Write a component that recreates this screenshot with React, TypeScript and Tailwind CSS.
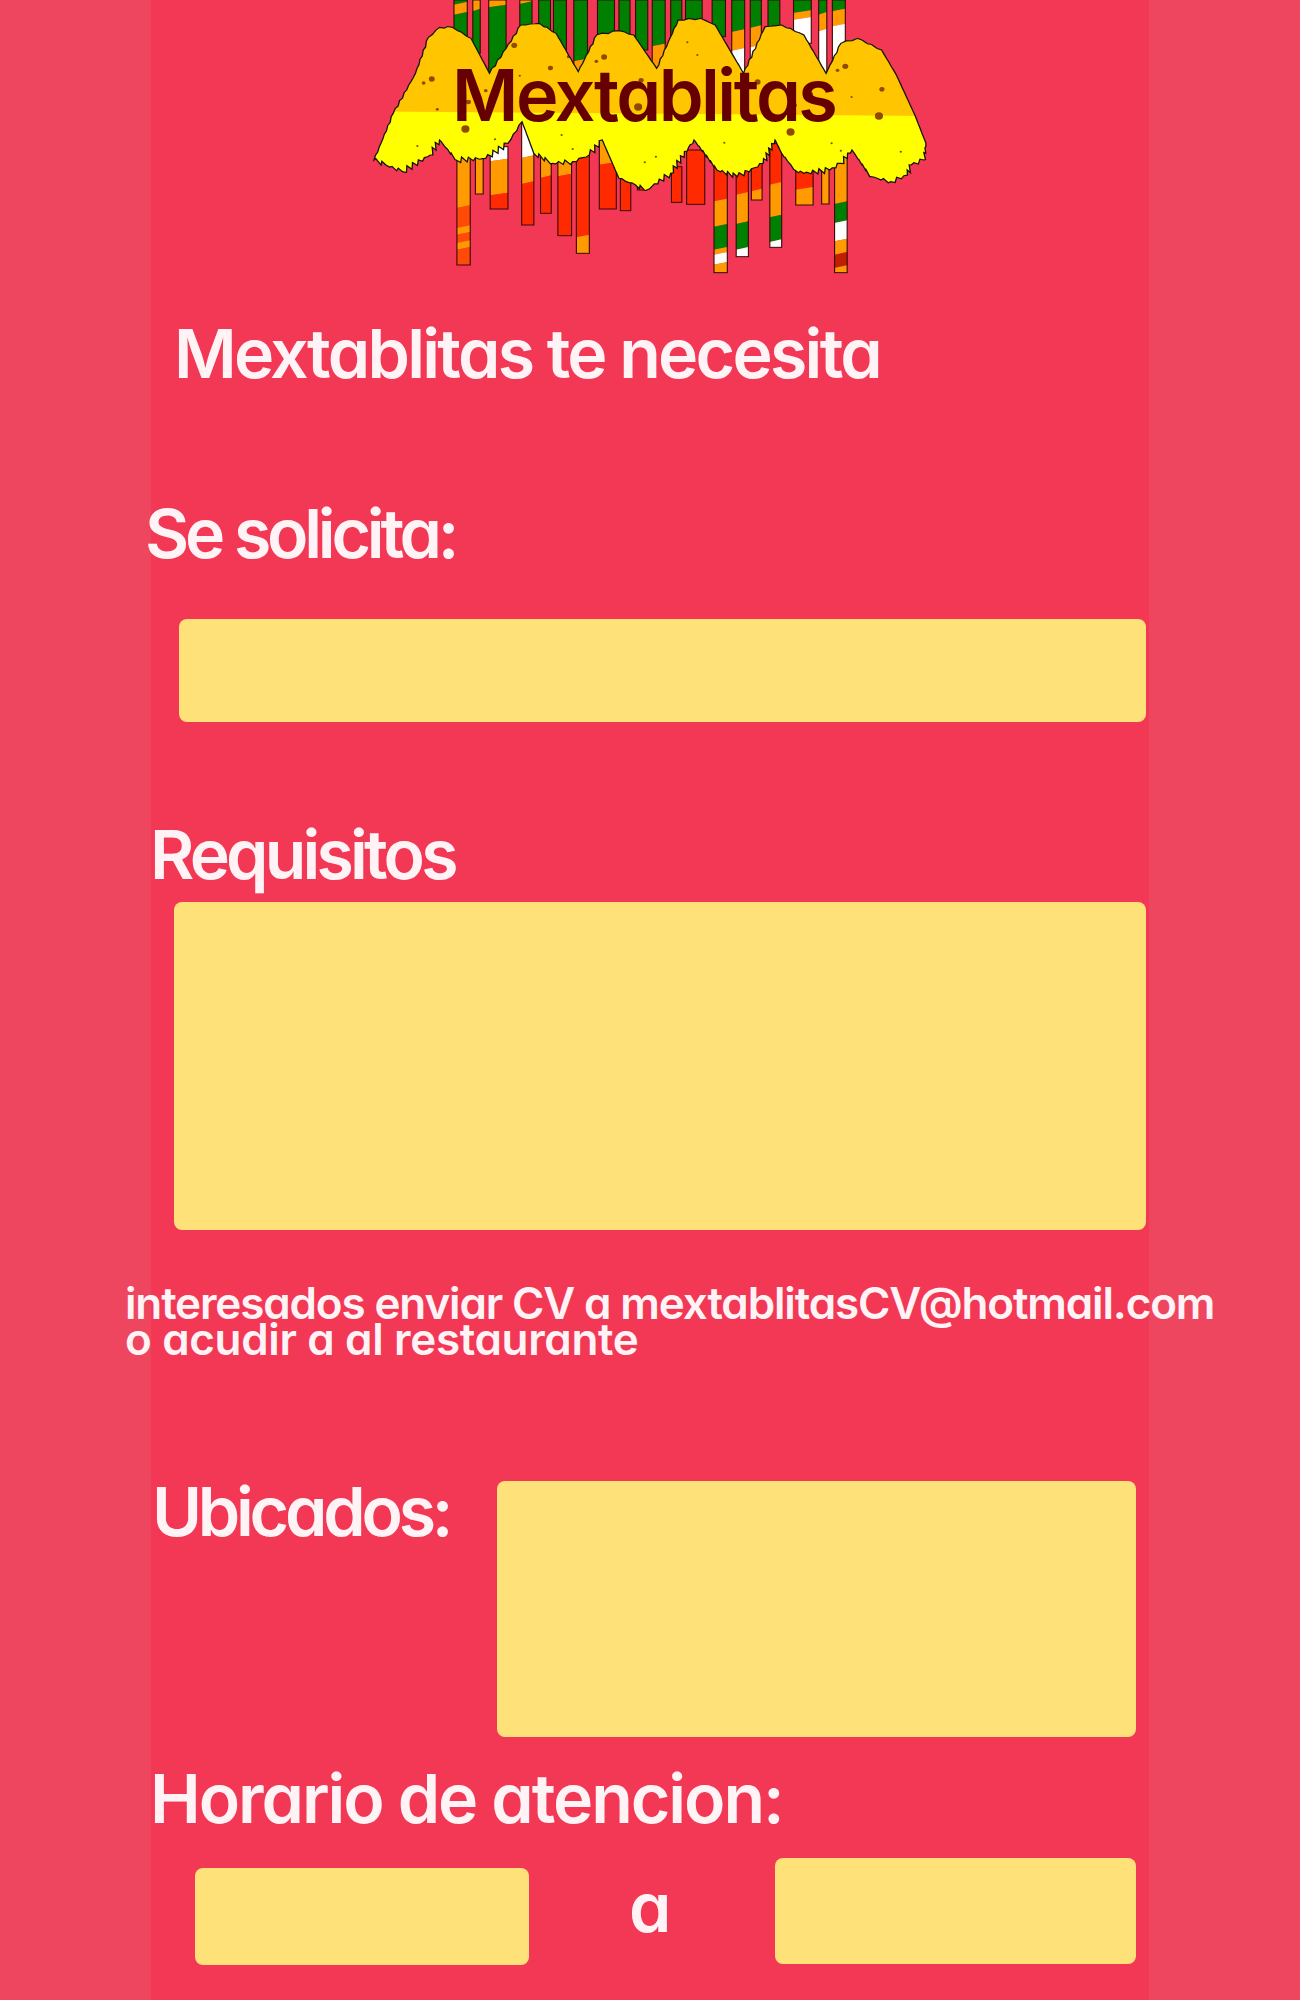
import React from "react";

type Band = [number, string];
type Bar = { x: number; w: number; top: number; end: number; bands: Band[] };

const GREEN = "#008000";
const ORANGE = "#ff9a00";
const RED = "#ff2a00";
const WHITE = "#ffffff";

// bars are in the logo's own 1568x870 drawing space
const topBars: Bar[] = [
  { x: 254, w: 36, top: 0, end: 130, bands: [[10, GREEN], [40, ORANGE], [130, GREEN]] },
  { x: 305, w: 20, top: 0, end: 160, bands: [[30, ORANGE], [160, GREEN]] },
  { x: 348, w: 47, top: 0, end: 220, bands: [[18, ORANGE], [220, GREEN]] },
  { x: 432, w: 33, top: 0, end: 110, bands: [[8, ORANGE], [110, GREEN]] },
  { x: 483, w: 32, top: 0, end: 110, bands: [[110, GREEN]] },
  { x: 523, w: 35, top: 0, end: 180, bands: [[180, GREEN]] },
  { x: 578, w: 37, top: 0, end: 220, bands: [[180, GREEN], [220, ORANGE]] },
  { x: 642, w: 46, top: 0, end: 130, bands: [[130, GREEN]] },
  { x: 700, w: 30, top: 0, end: 120, bands: [[120, GREEN]] },
  { x: 745, w: 33, top: 0, end: 150, bands: [[150, GREEN]] },
  { x: 790, w: 35, top: 0, end: 210, bands: [[135, GREEN], [210, ORANGE]] },
  { x: 840, w: 30, top: 0, end: 120, bands: [[120, GREEN]] },
  { x: 880, w: 45, top: 0, end: 80, bands: [[80, GREEN]] },
  { x: 952, w: 36, top: 0, end: 110, bands: [[110, GREEN]] },
  { x: 1005, w: 35, top: 0, end: 220, bands: [[92, GREEN], [148, ORANGE], [220, WHITE]] },
  { x: 1055, w: 30, top: 0, end: 180, bands: [[80, GREEN], [138, ORANGE], [180, WHITE]] },
  { x: 1103, w: 32, top: 0, end: 90, bands: [[90, GREEN]] },
  { x: 1172, w: 48, top: 0, end: 130, bands: [[35, GREEN], [55, ORANGE], [130, WHITE]] },
  { x: 1240, w: 22, top: 0, end: 225, bands: [[40, GREEN], [90, ORANGE], [225, WHITE]] },
  { x: 1277, w: 35, top: 0, end: 190, bands: [[30, GREEN], [75, ORANGE], [190, WHITE]] },
];

const bottomBars: Bar[] = [
  { x: 262, w: 36, top: 450, end: 795, bands: [[620, ORANGE], [680, "#ff4a08"], [700, ORANGE], [725, "#ff4a08"], [745, ORANGE], [795, "#ff4a08"]] },
  { x: 312, w: 21, top: 450, end: 582, bands: [[582, ORANGE]] },
  { x: 352, w: 48, top: 440, end: 627, bands: [[480, WHITE], [582, ORANGE], [627, RED]] },
  { x: 437, w: 33, top: 370, end: 675, bands: [[470, WHITE], [548, ORANGE], [675, RED]] },
  { x: 488, w: 29, top: 450, end: 640, bands: [[530, ORANGE], [640, RED]] },
  { x: 535, w: 37, top: 450, end: 707, bands: [[525, ORANGE], [707, RED]] },
  { x: 585, w: 35, top: 450, end: 760, bands: [[708, RED], [760, ORANGE]] },
  { x: 647, w: 46, top: 420, end: 627, bands: [[490, ORANGE], [627, RED]] },
  { x: 704, w: 28, top: 500, end: 632, bands: [[632, RED]] },
  { x: 750, w: 25, top: 520, end: 570, bands: [[570, RED]] },
  { x: 842, w: 28, top: 500, end: 607, bands: [[607, RED]] },
  { x: 883, w: 49, top: 450, end: 613, bands: [[613, RED]] },
  { x: 957, w: 36, top: 490, end: 818, bands: [[600, RED], [676, ORANGE], [745, GREEN], [760, ORANGE], [790, WHITE], [818, ORANGE]] },
  { x: 1017, w: 33, top: 500, end: 770, bands: [[580, RED], [668, ORANGE], [745, GREEN], [770, WHITE]] },
  { x: 1058, w: 29, top: 480, end: 600, bands: [[570, RED], [600, ORANGE]] },
  { x: 1108, w: 32, top: 430, end: 742, bands: [[550, RED], [648, ORANGE], [722, GREEN], [742, WHITE]] },
  { x: 1178, w: 47, top: 500, end: 615, bands: [[565, RED], [615, ORANGE]] },
  { x: 1248, w: 20, top: 500, end: 612, bands: [[612, ORANGE]] },
  { x: 1283, w: 34, top: 470, end: 818, bands: [[608, ORANGE], [665, GREEN], [720, WHITE], [760, ORANGE], [800, "#c02000"], [818, ORANGE]] },
];

const outline: [number, number][] = [
  [38, 480], [90, 340], [150, 220], [185, 112], [215, 82], [250, 82], [300, 115], [350, 220],
  [395, 145], [435, 75], [485, 70], [530, 100], [590, 215], [640, 105], [700, 92], [740, 105],
  [802, 205], [860, 60], [920, 55], [960, 75], [1037, 220], [1095, 80], [1140, 75], [1200, 105],
  [1260, 220], [1300, 130], [1345, 115], [1410, 150], [1450, 225], [1500, 345], [1530, 430],
  [1525, 480], [1490, 495], [1480, 525], [1435, 545], [1380, 530], [1330, 450], [1300, 490],
  [1270, 510], [1200, 520], [1175, 510], [1140, 460], [1122, 420], [1090, 490], [1020, 530],
  [965, 510], [903, 420], [840, 520], [775, 570], [745, 555], [700, 535], [655, 420], [620, 465],
  [575, 485], [520, 490], [470, 460], [438, 365], [400, 430], [340, 475], [260, 480], [215, 420],
  [190, 465], [115, 515], [70, 495],
];

// rough brush edge: split every side and nudge the points, harder along the fringe
function bodyPath() {
  const pts: string[] = [];
  outline.forEach(([x, y], i) => {
    const [nx, ny] = outline[(i + 1) % outline.length];
    const fringe = y > 410 && ny > 410;
    const steps = Math.max(1, Math.round(Math.hypot(nx - x, ny - y) / (fringe ? 9 : 14)));
    for (let s = 0; s < steps; s++) {
      const t = s / steps;
      const n = s === 0 ? 0 : Math.sin((i + 1) * 7.3 + s * 2.9) * (fringe ? 8 : 2.5);
      pts.push(`${(x + (nx - x) * t + n * 0.4).toFixed(1)},${(y + (ny - y) * t + n).toFixed(1)}`);
    }
  });
  return `M${pts.join("L")}Z`;
}

const spots: [number, number, number][] = [
  [194, 237, 8], [172, 249, 5], [340, 272, 5], [209, 328, 4], [285, 387, 11], [417, 136, 8],
  [515, 204, 7], [432, 227, 3], [660, 171, 8], [639, 184, 5], [564, 170, 5], [760, 241, 7],
  [752, 321, 11], [1075, 246, 8], [1174, 316, 7], [1164, 396, 11], [1312, 199, 8], [1291, 211, 5],
  [1411, 268, 7], [1329, 291, 3], [1403, 348, 11], [1459, 234, 5], [293, 306, 7], [1220, 282, 5],
  [155, 438, 3], [575, 447, 3], [985, 428, 3], [1275, 430, 3], [800, 470, 3], [770, 487, 3],
  [365, 418, 3], [1300, 452, 3], [1462, 455, 3], [545, 405, 3], [885, 127, 3], [912, 165, 3],
];

// bands are cut on a slight slant, like a brush passing over the bar
function BarShape({ bar }: { bar: Bar }) {
  const r = bar.x + bar.w;
  const edge = (y: number, side: number) => (y === bar.top || y === bar.end ? y : y + side * 4);
  let from = bar.top;
  return (
    <g>
      {bar.bands.map(([to, color]) => {
        const y = from;
        from = to;
        const points = `${bar.x},${edge(y, 1)} ${r},${edge(y, -1)} ${r},${edge(to, -1)} ${bar.x},${edge(to, 1)}`;
        return <polygon key={`${to}-${color}`} points={points} fill={color} />;
      })}
      <rect x={bar.x} y={bar.top} width={bar.w} height={bar.end - bar.top} fill="none" stroke="#3a0808" strokeWidth="3" />
    </g>
  );
}

function Logo() {
  const d = bodyPath();
  return (
    <div className="relative ml-[209px] h-[290px] w-[580px]">
      <svg width="580" height="290" viewBox="0 0 1568 870" preserveAspectRatio="none" className="block">
        <defs>
          <clipPath id="body">
            <path d={d} />
          </clipPath>
        </defs>
        {topBars.map((b) => (
          <BarShape key={b.x} bar={b} />
        ))}
        {bottomBars.map((b) => (
          <BarShape key={b.x} bar={b} />
        ))}
        <g clipPath="url(#body)">
          <rect x="0" y="0" width="1568" height="870" fill="#ffff00" />
          <polygon points="0,0 1568,0 1568,348 0,334" fill="#ffc600" />
          {spots.map(([x, y, r]) => (
            <ellipse key={`${x}-${y}`} cx={x} cy={y} rx={r} ry={r} fill="#8f4a00" />
          ))}
        </g>
        <path d={d} fill="none" stroke="#111111" strokeWidth="3.5" />
      </svg>
      <span className="absolute top-[50px] left-[92px] text-[72px] leading-[90px] font-semibold tracking-[-0.035em] whitespace-nowrap text-[#660000]">
        Mextablitas
      </span>
    </div>
  );
}

function Field({ className }: { className: string }) {
  return <div className={`rounded-lg bg-[#ffe17a] ${className}`} />;
}

export default function App() {
  return (
    <div
      className="h-[2000px] w-full overflow-hidden bg-[#ef465f] text-[#fff3f6]"
      style={{ fontFamily: "Inter, 'Noto Sans', sans-serif", fontFeatureSettings: "'cv11'" }}
    >
      <main className="ml-[151px] flex h-full w-[998px] flex-col bg-[#f23855]">
        <Logo />

        <h1 className="mt-[28px] ml-[23px] text-[68px] leading-[70px] font-semibold tracking-[-0.04em] whitespace-nowrap">
          Mextablitas te necesita
        </h1>

        <h2 className="mt-[110px] ml-[-6px] text-[68px] leading-[70px] font-semibold tracking-[-0.062em] whitespace-nowrap">
          Se solicita:
        </h2>
        <Field className="mt-[51px] ml-[28px] h-[103px] w-[967px]" />

        <h2 className="mt-[97px] ml-[-1px] text-[68px] leading-[70px] font-semibold tracking-[-0.056em] whitespace-nowrap">
          Requisitos
        </h2>
        <Field className="mt-[13px] ml-[23px] h-[328px] w-[972px]" />

        <p className="mt-[55px] ml-[-26px] text-[44px] leading-[36px] font-semibold whitespace-nowrap">
          <span className="block tracking-[-0.026em]">interesados enviar CV a mextablitasCV@hotmail.com</span>
          <span className="block tracking-[-0.008em]">o acudir a al restaurante</span>
        </p>

        <div className="mt-[124px] flex items-start">
          <h2 className="mt-[-5px] ml-[1px] w-[345px] text-[68px] leading-[70px] font-semibold tracking-[-0.062em] whitespace-nowrap">
            Ubicados:
          </h2>
          <Field className="h-[256px] w-[639px]" />
        </div>

        <h2 className="mt-[26px] ml-[-1px] text-[68px] leading-[70px] font-semibold tracking-[-0.03em] whitespace-nowrap">
          Horario de atencion:
        </h2>

        <div className="mt-[25px] flex items-start">
          <Field className="mt-[10px] ml-[44px] h-[97px] w-[334px]" />
          <span className="mt-[14px] ml-[100px] w-[146px] text-[68px] leading-[70px] font-semibold">a</span>
          <Field className="h-[106px] w-[361px]" />
        </div>
      </main>
    </div>
  );
}
